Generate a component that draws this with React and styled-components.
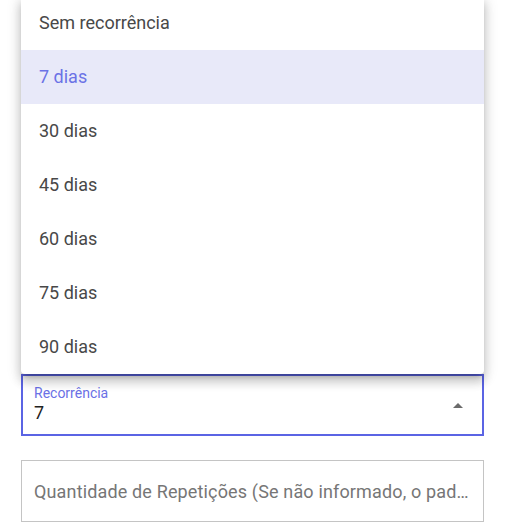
import React from "react";
import styled, { createGlobalStyle } from "styled-components";

const GlobalStyle = createGlobalStyle`
  body {
    margin: 0;
    background: #ffffff;
    font-family: Roboto, "Liberation Sans", sans-serif;
  }
`;

const Page = styled.div`
  width: 507px;
  height: 532px;
  overflow: hidden;
  padding: 0 23px 0 21px;
  box-sizing: border-box;
`;

const Menu = styled.ul`
  list-style: none;
  margin: -4px 0 0;
  padding: 0;
  background: #fff;
  border-radius: 4px;
  box-shadow: 0 5px 5px -3px rgba(0, 0, 0, 0.2), 0 8px 10px 1px rgba(0, 0, 0, 0.14),
    0 3px 14px 2px rgba(0, 0, 0, 0.12);
  position: relative;
  z-index: 2;
`;

const Option = styled.li`
  height: 54px;
  display: flex;
  align-items: center;
  padding: 0 18px;
  font-size: 18px;
  line-height: 22px;
  color: ${(p) => (p.$selected ? "#6b72e6" : "#484848")};
  background: ${(p) => (p.$selected ? "#e8e9f9" : "transparent")};
`;

const Select = styled.div`
  position: relative;
  height: 62px;
  box-sizing: border-box;
  border: 2px solid #5b64e4;
  padding: 9px 11px 0;
  display: flex;
  flex-direction: column;
`;

const Label = styled.span`
  font-size: 14px;
  color: #6a71e6;
  line-height: 16px;
`;

const Value = styled.span`
  font-size: 18px;
  color: #222;
  line-height: 22px;
  margin-top: 1px;
`;

const Arrow = styled.span`
  position: absolute;
  right: 19px;
  top: 27px;
  width: 0;
  height: 0;
  border-left: 5px solid transparent;
  border-right: 5px solid transparent;
  border-bottom: 5px solid #6b6b6b;
`;

const Field = styled.div`
  margin-top: 24px;
  height: 62px;
  box-sizing: border-box;
  border: 1px solid #c4c4c4;
  padding: 0 13px 0 12px;
  display: flex;
  align-items: center;
`;

const Placeholder = styled.span`
  font-size: 18px;
  letter-spacing: 0.15px;
  color: #767676;
  white-space: nowrap;
  overflow: hidden;
  text-overflow: ellipsis;
`;

const options = ["Sem recorrência", "7 dias", "30 dias", "45 dias", "60 dias", "75 dias", "90 dias"];

export default function App() {
  return (
    <>
      <GlobalStyle />
      <Page>
        <Menu>
          {options.map((o) => (
            <Option key={o} $selected={o === "7 dias"}>
              {o}
            </Option>
          ))}
        </Menu>
        <Select>
          <Label>Recorrência</Label>
          <Value>7</Value>
          <Arrow />
        </Select>
        <Field>
          <Placeholder>Quantidade de Repetições (Se não informado, o padrão é 1)</Placeholder>
        </Field>
      </Page>
    </>
  );
}
